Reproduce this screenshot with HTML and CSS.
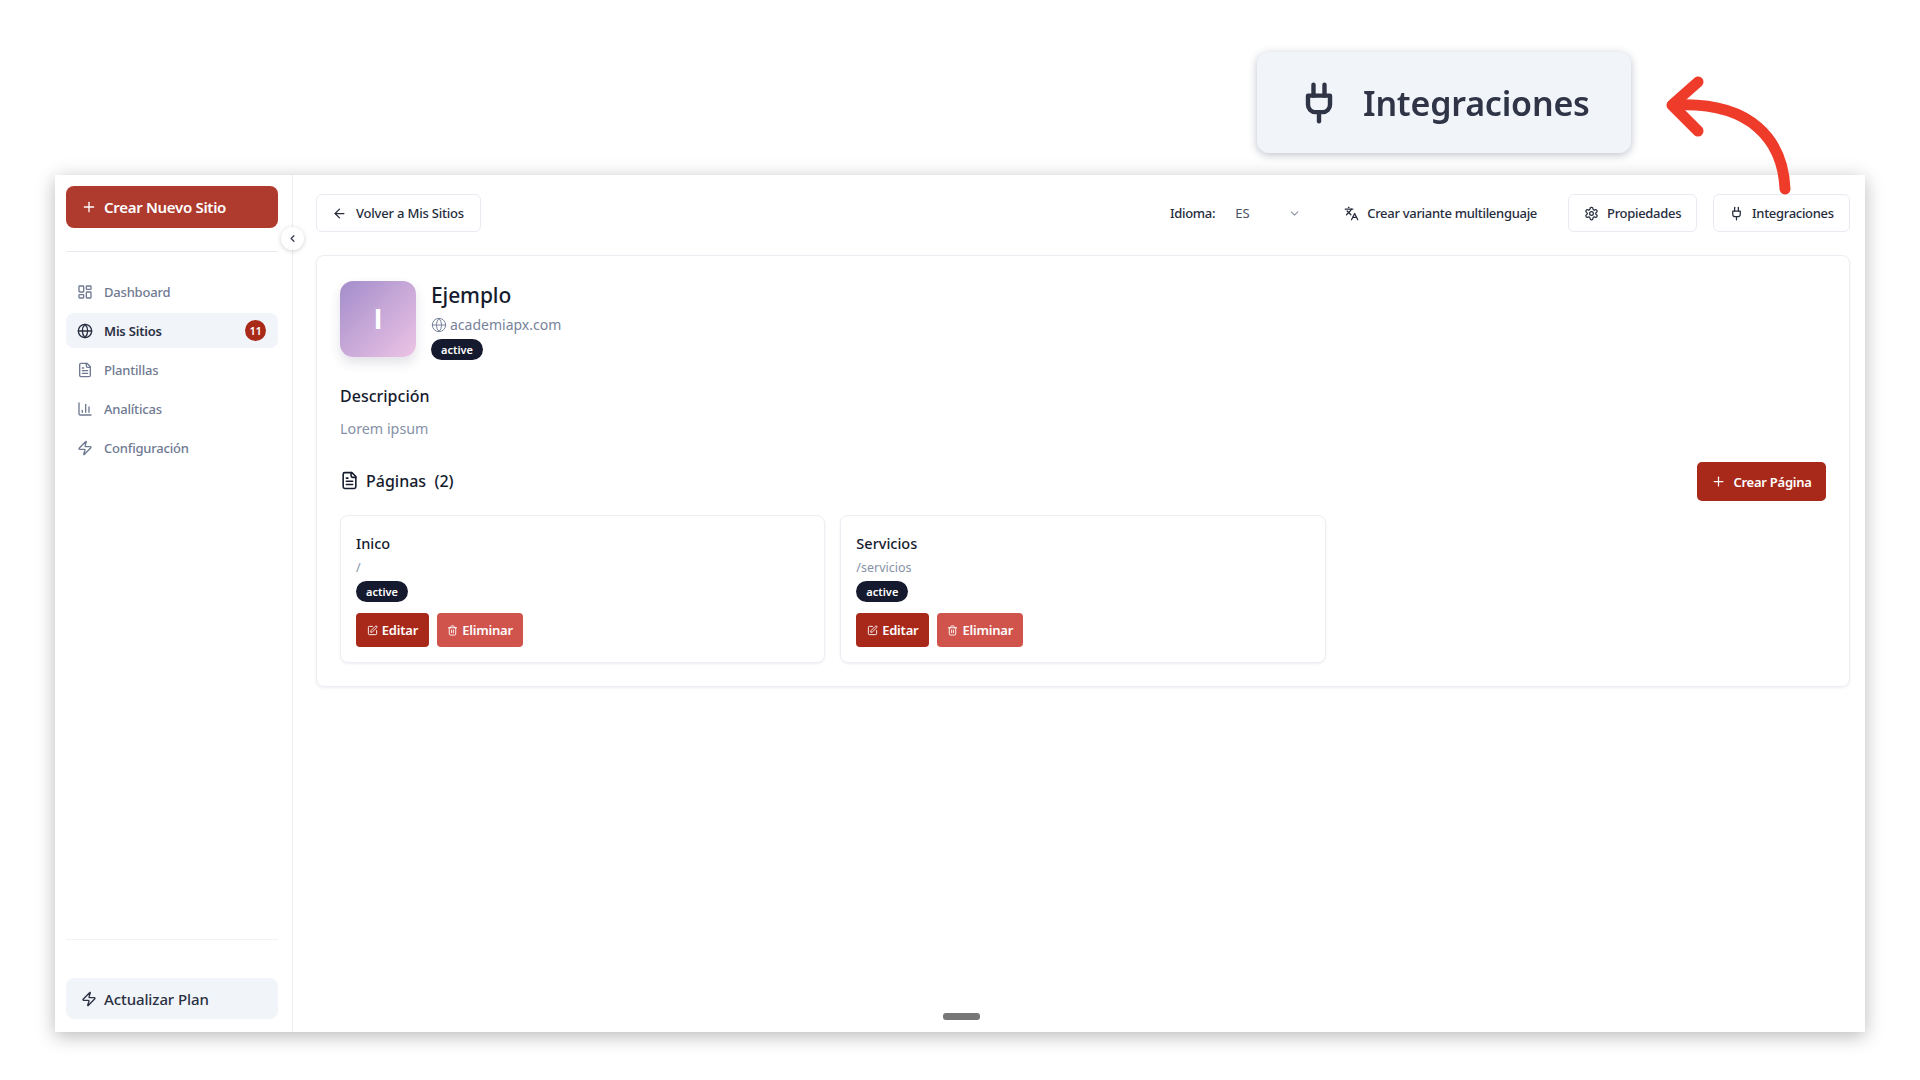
FILE: index.html
```html
<!DOCTYPE html>
<html lang="es">
<head>
  <meta charset="UTF-8">
  <meta name="viewport" content="width=device-width, initial-scale=1.0">
  <title>Ejemplo - Mis Sitios</title>
  <link rel="stylesheet" href="styles.css">
</head>
<body>
  <svg class="sprite" xmlns="http://www.w3.org/2000/svg">
    <symbol id="i-plus" viewBox="0 0 24 24"><path d="M5 12h14"/><path d="M12 5v14"/></symbol>
    <symbol id="i-dash" viewBox="0 0 24 24"><rect x="3" y="3" width="7" height="9" rx="1"/><rect x="14" y="3" width="7" height="5" rx="1"/><rect x="14" y="12" width="7" height="9" rx="1"/><rect x="3" y="16" width="7" height="5" rx="1"/></symbol>
    <symbol id="i-globe" viewBox="0 0 24 24"><circle cx="12" cy="12" r="10"/><path d="M12 2a14.5 14.5 0 0 0 0 20 14.5 14.5 0 0 0 0-20"/><path d="M2 12h20"/></symbol>
    <symbol id="i-file" viewBox="0 0 24 24"><path d="M15 2H6a2 2 0 0 0-2 2v16a2 2 0 0 0 2 2h12a2 2 0 0 0 2-2V7Z"/><path d="M14 2v4a2 2 0 0 0 2 2h4"/><path d="M10 9H8"/><path d="M16 13H8"/><path d="M16 17H8"/></symbol>
    <symbol id="i-chart" viewBox="0 0 24 24"><path d="M3 3v16a2 2 0 0 0 2 2h16"/><path d="M18 17V9"/><path d="M13 17V5"/><path d="M8 17v-3"/></symbol>
    <symbol id="i-zap" viewBox="0 0 24 24"><path d="M4 14a1 1 0 0 1-.78-1.63l9.9-10.2a.5.5 0 0 1 .86.46l-1.92 6.02A1 1 0 0 0 13 10h7a1 1 0 0 1 .78 1.63l-9.9 10.2a.5.5 0 0 1-.86-.46l1.92-6.02A1 1 0 0 0 11 14z"/></symbol>
    <symbol id="i-plug" viewBox="0 0 24 24"><path d="M12 22v-5"/><path d="M9 8V2"/><path d="M15 8V2"/><path d="M18 8v5a4 4 0 0 1-4 4h-4a4 4 0 0 1-4-4V8Z"/></symbol>
    <symbol id="i-gear" viewBox="0 0 24 24"><path d="M12.22 2h-.44a2 2 0 0 0-2 2v.18a2 2 0 0 1-1 1.73l-.43.25a2 2 0 0 1-2 0l-.15-.08a2 2 0 0 0-2.73.73l-.22.38a2 2 0 0 0 .73 2.73l.15.1a2 2 0 0 1 1 1.72v.51a2 2 0 0 1-1 1.74l-.15.09a2 2 0 0 0-.73 2.73l.22.38a2 2 0 0 0 2.73.73l.15-.08a2 2 0 0 1 2 0l.43.25a2 2 0 0 1 1 1.73V20a2 2 0 0 0 2 2h.44a2 2 0 0 0 2-2v-.18a2 2 0 0 1 1-1.73l.43-.25a2 2 0 0 1 2 0l.15.08a2 2 0 0 0 2.73-.73l.22-.39a2 2 0 0 0-.73-2.73l-.15-.08a2 2 0 0 1-1-1.74v-.5a2 2 0 0 1 1-1.74l.15-.09a2 2 0 0 0 .73-2.73l-.22-.38a2 2 0 0 0-2.73-.73l-.15.08a2 2 0 0 1-2 0l-.43-.25a2 2 0 0 1-1-1.73V4a2 2 0 0 0-2-2z"/><circle cx="12" cy="12" r="3"/></symbol>
    <symbol id="i-lang" viewBox="0 0 24 24"><path d="m5 8 6 6"/><path d="m4 14 6-6 2-3"/><path d="M2 5h12"/><path d="M7 2h1"/><path d="m22 22-5-10-5 10"/><path d="M14 18h6"/></symbol>
    <symbol id="i-pen" viewBox="0 0 24 24"><path d="M12 3H5a2 2 0 0 0-2 2v14a2 2 0 0 0 2 2h14a2 2 0 0 0 2-2v-7"/><path d="M18.375 2.625a1 1 0 0 1 3 3l-9.013 9.014a2 2 0 0 1-.853.505l-2.873.84a.5.5 0 0 1-.62-.62l.84-2.873a2 2 0 0 1 .506-.852z"/></symbol>
    <symbol id="i-trash" viewBox="0 0 24 24"><path d="M3 6h18"/><path d="M19 6v14c0 1-1 2-2 2H7c-1 0-2-1-2-2V6"/><path d="M8 6V4c0-1 1-2 2-2h4c1 0 2 1 2 2v2"/><path d="M10 11v6"/><path d="M14 11v6"/></symbol>
    <symbol id="i-back" viewBox="0 0 24 24"><path d="m12 19-7-7 7-7"/><path d="M19 12H5"/></symbol>
    <symbol id="i-down" viewBox="0 0 24 24"><path d="m6 9 6 6 6-6"/></symbol>
    <symbol id="i-left" viewBox="0 0 24 24"><path d="m15 18-6-6 6-6"/></symbol>
  </svg>

  <!-- zoomed callout above the window -->
  <div class="callout">
    <svg class="icon"><use href="#i-plug"/></svg>
    <span>Integraciones</span>
  </div>
  <svg class="arrow" viewBox="0 0 140 125" xmlns="http://www.w3.org/2000/svg">
    <path d="M124 115C122 66 90 28 16 31"/>
    <path d="M37 8L11 31L37 57"/>
  </svg>

  <div class="window">
    <aside class="sidebar">
      <button class="new-site"><svg class="icon"><use href="#i-plus"/></svg>Crear Nuevo Sitio</button>
      <hr class="rule rule-top">
      <nav class="nav">
        <a class="nav-item"><svg class="icon"><use href="#i-dash"/></svg>Dashboard</a>
        <a class="nav-item active"><svg class="icon"><use href="#i-globe"/></svg>Mis Sitios<span class="count">11</span></a>
        <a class="nav-item"><svg class="icon"><use href="#i-file"/></svg>Plantillas</a>
        <a class="nav-item"><svg class="icon"><use href="#i-chart"/></svg>Analíticas</a>
        <a class="nav-item"><svg class="icon"><use href="#i-zap"/></svg>Configuración</a>
      </nav>
      <hr class="rule rule-bottom">
      <button class="upgrade"><svg class="icon"><use href="#i-zap"/></svg>Actualizar Plan</button>
      <span class="collapse"><svg class="icon"><use href="#i-left"/></svg></span>
    </aside>

    <main class="main">
      <div class="toolbar">
        <button class="btn back"><svg class="icon"><use href="#i-back"/></svg>Volver a Mis Sitios</button>
        <div class="tools">
          <span class="lang-label">Idioma:</span>
          <span class="lang-select">ES<svg class="icon"><use href="#i-down"/></svg></span>
          <span class="variant"><svg class="icon"><use href="#i-lang"/></svg>Crear variante multilenguaje</span>
          <button class="btn props"><svg class="icon"><use href="#i-gear"/></svg>Propiedades</button>
          <button class="btn integ"><svg class="icon"><use href="#i-plug"/></svg>Integraciones</button>
        </div>
      </div>

      <section class="site">
        <div class="site-head">
          <div class="avatar">I</div>
          <div class="site-info">
            <h1>Ejemplo</h1>
            <p class="domain"><svg class="icon"><use href="#i-globe"/></svg>academiapx.com</p>
            <span class="badge">active</span>
          </div>
        </div>

        <h2 class="desc-title">Descripción</h2>
        <p class="desc">Lorem ipsum</p>

        <div class="pages-head">
          <h2><svg class="icon"><use href="#i-file"/></svg>Páginas&nbsp; (2)</h2>
          <button class="create-page"><svg class="icon"><use href="#i-plus"/></svg>Crear Página</button>
        </div>

        <div class="pages">
          <div class="page">
            <h3>Inico</h3>
            <p class="path">/</p>
            <span class="badge">active</span>
            <div class="actions">
              <button class="edit"><svg class="icon"><use href="#i-pen"/></svg>Editar</button>
              <button class="delete"><svg class="icon"><use href="#i-trash"/></svg>Eliminar</button>
            </div>
          </div>
          <div class="page">
            <h3>Servicios</h3>
            <p class="path">/servicios</p>
            <span class="badge">active</span>
            <div class="actions">
              <button class="edit"><svg class="icon"><use href="#i-pen"/></svg>Editar</button>
              <button class="delete"><svg class="icon"><use href="#i-trash"/></svg>Eliminar</button>
            </div>
          </div>
        </div>
      </section>

      <span class="handle"></span>
    </main>
  </div>
</body>
</html>
```
FILE: styles.css
```css
/* Basic styling */
* {
  box-sizing: border-box;
}
body {
  margin: 0;
  padding: 175px 55px 0;
  height: 1080px;
  overflow: hidden;
  background-color: #fff;
  font-family: "Noto Sans", sans-serif;
  color: #161b2e;
  position: relative;
}
h1, h2, h3, p {
  margin: 0;
}
button {
  font-family: inherit;
  cursor: pointer;
  border: 0;
  white-space: nowrap;
}
.sprite {
  display: none;
}
.icon {
  width: 16px;
  height: 16px;
  flex: none;
  fill: none;
  stroke: currentColor;
  stroke-width: 2;
  stroke-linecap: round;
  stroke-linejoin: round;
}

/* Callout and arrow */
.callout {
  position: absolute;
  left: 1257px;
  top: 52px;
  width: 374px;
  height: 101px;
  padding-left: 40px;
  display: flex;
  align-items: center;
  gap: 22px;
  background-color: #f1f4f9;
  border-radius: 12px;
  box-shadow: 0 2px 8px rgba(40, 50, 80, 0.3);
  font-size: 34px;
  font-weight: 600;
  letter-spacing: -0.2px;
  color: #2f3447;
  filter: blur(0.5px);
}
.callout .icon {
  width: 44px;
  height: 44px;
  stroke-width: 2.4;
}
.arrow {
  position: absolute;
  left: 1661px;
  top: 74px;
  width: 140px;
  height: 125px;
  z-index: 2;
  fill: none;
  stroke: #ee3b2a;
  stroke-width: 11;
  stroke-linecap: round;
  stroke-linejoin: round;
}

/* Window */
.window {
  display: flex;
  height: 857px;
  background-color: #fff;
  box-shadow: 0 4px 18px rgba(0, 0, 0, 0.28);
}

/* Sidebar */
.sidebar {
  width: 238px;
  flex: none;
  padding: 11px 14px 13px 11px;
  display: flex;
  flex-direction: column;
  border-right: 1px solid #eceef4;
  position: relative;
}
.new-site {
  height: 42px;
  padding: 0 15px;
  display: flex;
  align-items: center;
  gap: 7px;
  background-color: #ae3b2e;
  color: #fff;
  font-size: 15px;
  font-weight: 600;
  letter-spacing: -0.3px;
  border-radius: 8px;
}
.rule {
  width: 100%;
  margin: 0;
  border: 0;
  border-top: 1px solid #e8eaf1;
}
.rule-top {
  margin-top: 23px;
}
.nav {
  margin-top: 22px;
  flex: 1;
  display: flex;
  flex-direction: column;
  gap: 4px;
}
.nav-item {
  height: 35px;
  padding: 0 11px;
  display: flex;
  align-items: center;
  gap: 11px;
  font-size: 13px;
  font-weight: 500;
  letter-spacing: -0.2px;
  color: #6f7a91;
  border-radius: 8px;
}
.nav-item.active {
  background-color: #f1f4f9;
  color: #2a3042;
  font-weight: 600;
}
.count {
  margin-left: auto;
  margin-right: 1px;
  width: 21px;
  height: 21px;
  display: flex;
  align-items: center;
  justify-content: center;
  border-radius: 50%;
  background-color: #a92a19;
  color: #fff;
  font-size: 11px;
}
.rule-bottom {
  border-color: #f1f2f7;
}
.upgrade {
  margin-top: 38px;
  height: 41px;
  padding: 0 15px;
  display: flex;
  align-items: center;
  gap: 7px;
  background-color: #f1f4f9;
  color: #2a3042;
  font-size: 15px;
  font-weight: 500;
  letter-spacing: -0.1px;
  border-radius: 8px;
}
.collapse {
  position: absolute;
  right: -12px;
  top: 52px;
  width: 23px;
  height: 23px;
  display: flex;
  align-items: center;
  justify-content: center;
  border-radius: 50%;
  background-color: #fff;
  box-shadow: 0 1px 5px rgba(0, 0, 0, 0.18);
  color: #3c4254;
}
.collapse .icon {
  width: 11px;
  height: 11px;
  stroke-width: 3;
}

/* Main */
.main {
  flex: 1;
  padding: 19px 15px 0 23px;
  position: relative;
}
.toolbar {
  display: flex;
  align-items: center;
  justify-content: space-between;
}
.tools {
  display: flex;
  align-items: center;
}
.btn {
  height: 38px;
  padding: 0 15px;
  display: flex;
  align-items: center;
  gap: 8px;
  background-color: #fff;
  color: #262c3d;
  border: 1px solid #e8ebf2;
  border-radius: 6px;
  font-size: 13px;
  font-weight: 500;
  letter-spacing: -0.3px;
}
.back {
  width: 165px;
  gap: 9px;
  letter-spacing: -0.2px;
}
.lang-label {
  font-size: 13px;
  font-weight: 500;
  letter-spacing: -0.3px;
  color: #262c3d;
}
.lang-select {
  width: 87px;
  margin-left: 20px;
  padding-right: 21px;
  display: flex;
  align-items: center;
  justify-content: space-between;
  font-size: 13px;
  color: #4a5165;
}
.lang-select .icon {
  width: 13px;
  height: 13px;
  color: #8b93a5;
}
.variant {
  margin-left: 22px;
  display: flex;
  align-items: center;
  gap: 8px;
  font-size: 13px;
  font-weight: 500;
  letter-spacing: -0.3px;
  color: #262c3d;
}
.props {
  margin-left: 31px;
  width: 129px;
}
.integ {
  margin-left: 16px;
  width: 137px;
}
.btn .icon, .variant .icon {
  width: 15px;
  height: 15px;
}

/* Site card */
.site {
  margin-top: 23px;
  height: 432px;
  padding: 25px 23px 0;
  border: 1px solid #eceef4;
  border-radius: 8px;
  box-shadow: 0 1px 3px rgba(30, 40, 70, 0.08);
}
.site-head {
  display: flex;
  gap: 15px;
}
.avatar {
  width: 76px;
  height: 76px;
  display: flex;
  align-items: center;
  justify-content: center;
  border-radius: 13px;
  background: linear-gradient(135deg, #a38dcb, #edc4e5);
  box-shadow: 0 6px 12px rgba(60, 50, 90, 0.14);
  color: #fff;
  font-family: "Liberation Sans", sans-serif;
  font-size: 29px;
  font-weight: 700;
}
.site-info h1 {
  margin-top: 1px;
  font-size: 21px;
  font-weight: 500;
  letter-spacing: -0.1px;
  line-height: 27px;
}
.domain {
  margin-top: 5px;
  display: flex;
  align-items: center;
  gap: 3px;
  font-size: 14px;
  line-height: 21px;
  color: #78839b;
}
.domain .icon {
  stroke-width: 1.5;
}
.badge {
  display: block;
  width: 52px;
  height: 21px;
  border-radius: 11px;
  background-color: #161a2e;
  color: #fff;
  font-size: 11px;
  font-weight: 600;
  line-height: 21px;
  text-align: center;
}
.site-info .badge {
  margin-top: 4px;
}
.desc-title {
  margin-top: 24px;
  font-size: 16px;
  font-weight: 500;
  line-height: 24px;
}
.desc {
  margin-top: 9px;
  font-size: 14.3px;
  line-height: 24px;
  color: #8691a6;
}
.pages-head {
  margin-top: 21px;
  display: flex;
  align-items: center;
  justify-content: space-between;
}
.pages-head h2 {
  margin-bottom: 2px;
  display: flex;
  align-items: center;
  gap: 7px;
  font-size: 16px;
  font-weight: 500;
}
.pages-head h2 .icon {
  width: 19px;
  height: 19px;
}
.create-page {
  width: 129px;
  height: 39px;
  display: flex;
  align-items: center;
  justify-content: center;
  gap: 7px;
  background-color: #a8291a;
  color: #fff;
  border-radius: 5px;
  font-size: 13px;
  font-weight: 600;
  letter-spacing: -0.25px;
}
.create-page .icon {
  width: 15px;
  height: 15px;
}
.pages {
  margin-top: 14px;
  display: grid;
  grid-template-columns: repeat(3, 1fr);
  gap: 15px;
}
.page {
  height: 148px;
  padding: 15px;
  border: 1px solid #eceef4;
  border-radius: 8px;
  box-shadow: 0 1px 2px rgba(30, 40, 70, 0.08);
}
.page h3 {
  font-size: 14.5px;
  font-weight: 500;
  line-height: 24px;
}
.path {
  margin-top: 4px;
  font-size: 12.5px;
  line-height: 18px;
  color: #8691a6;
}
.page .badge {
  margin-top: 4px;
}
.actions {
  margin-top: 11px;
  display: flex;
  gap: 8px;
}
.edit, .delete {
  height: 34px;
  display: flex;
  align-items: center;
  justify-content: center;
  gap: 4px;
  color: #fff;
  border-radius: 4px;
  font-size: 13px;
  font-weight: 600;
  letter-spacing: -0.2px;
}
.edit {
  width: 73px;
  background-color: #a8291a;
}
.delete {
  width: 86px;
  background-color: #d0544c;
}
.edit .icon, .delete .icon {
  width: 11px;
  height: 11px;
}
.handle {
  position: absolute;
  left: 650px;
  bottom: 12px;
  width: 37px;
  height: 7px;
  border-radius: 3px;
  background-color: #777;
}
```
